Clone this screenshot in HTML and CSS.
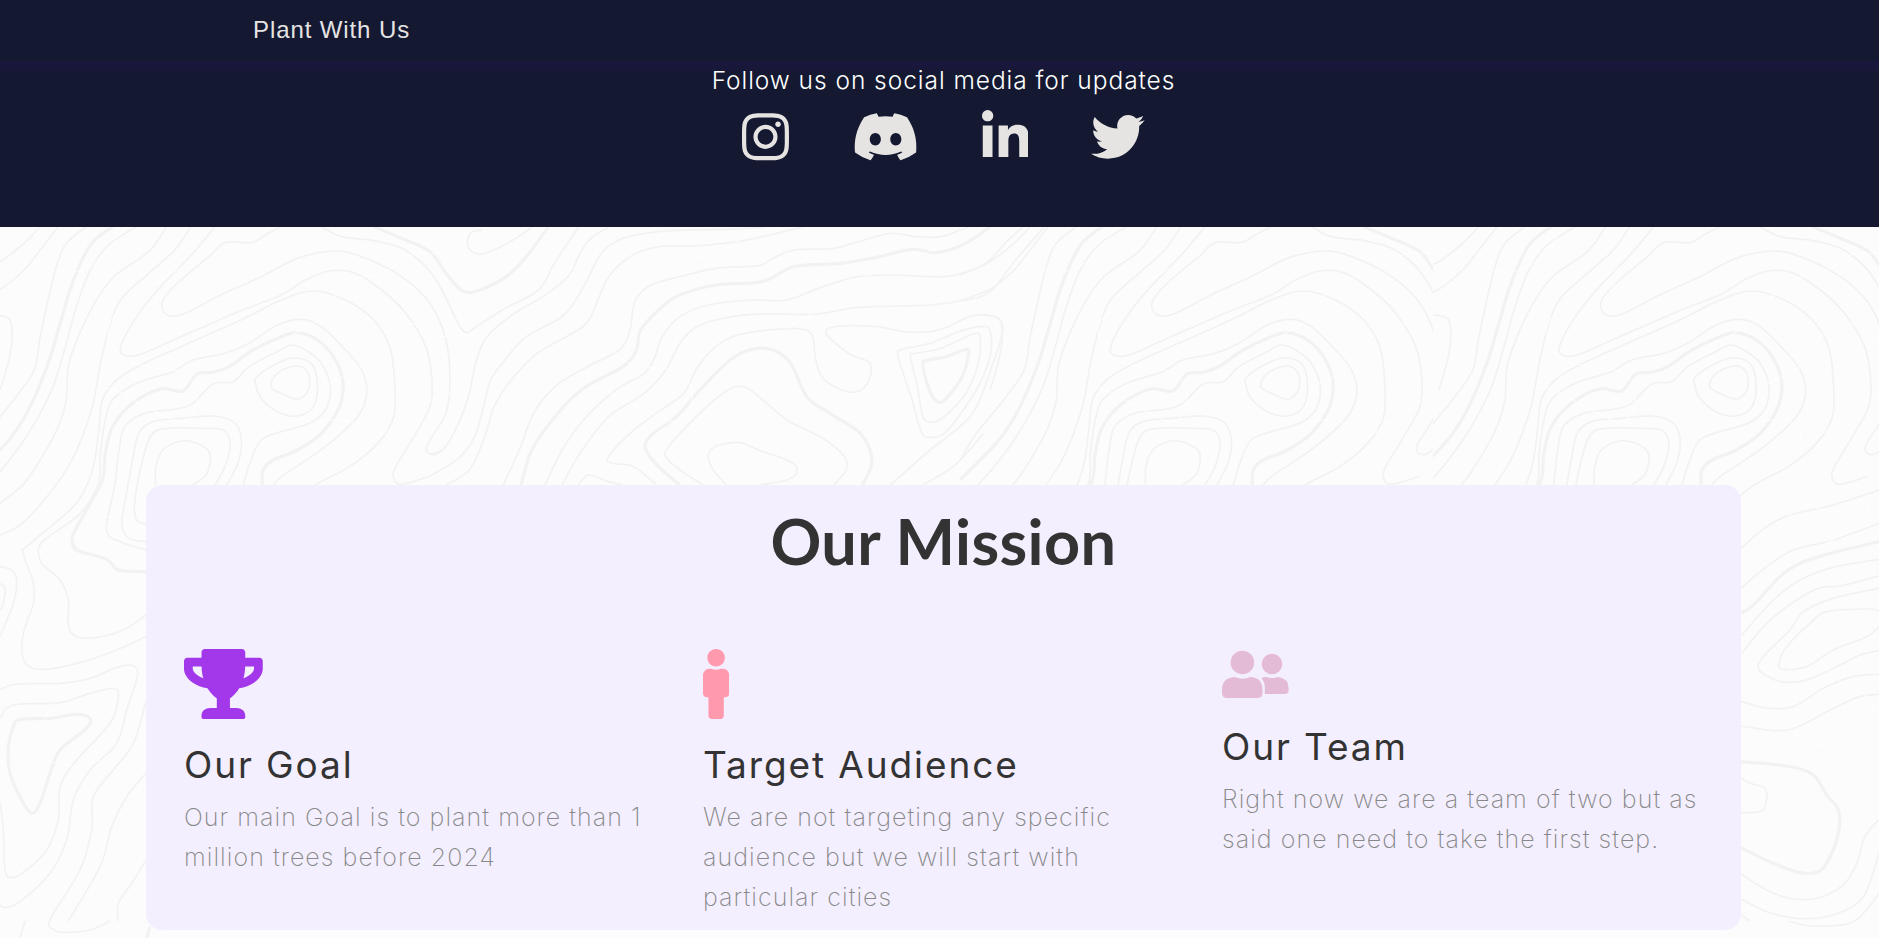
FILE: index.html
```html
<!DOCTYPE html>
<html lang="en">
<head>
    <meta charset="UTF-8">
    <meta name="viewport" content="width=device-width, initial-scale=1.0">
    <title>Plant With Us</title>
    <link rel="stylesheet" href="styles.css">
</head>
<body>
    <svg class="topo" id="topo" width="1879" height="938" viewBox="0 0 1879 938"></svg>

    <nav class="navbar">
        <a class="brand">Plant With Us</a>
    </nav>

    <section class="social">
        <p class="social-text">Follow us on social media for updates</p>
        <div class="social-icons">
            <svg class="icon-instagram" viewBox="0 0 448 512"><path d="M224.1 141c-63.6 0-114.9 51.3-114.9 114.9s51.3 114.9 114.9 114.9S339 319.5 339 255.9 287.7 141 224.1 141zm0 189.6c-41.1 0-74.7-33.5-74.7-74.7s33.5-74.7 74.7-74.7 74.7 33.5 74.7 74.7-33.6 74.7-74.7 74.7zm146.4-194.3c0 14.9-12 26.8-26.8 26.8-14.9 0-26.8-12-26.8-26.8s12-26.8 26.8-26.8 26.8 12 26.8 26.8zm76.1 27.2c-1.7-35.9-9.9-67.7-36.2-93.9-26.2-26.2-58-34.4-93.9-36.2-37-2.1-147.9-2.1-184.9 0-35.8 1.7-67.6 9.9-93.9 36.1s-34.4 58-36.2 93.9c-2.1 37-2.1 147.9 0 184.9 1.7 35.9 9.9 67.7 36.2 93.9s58 34.4 93.9 36.2c37 2.1 147.9 2.1 184.9 0 35.9-1.7 67.7-9.9 93.9-36.2 26.2-26.2 34.4-58 36.2-93.9 2.1-37 2.1-147.8 0-184.8zM398.8 388c-7.8 19.6-22.9 34.7-42.6 42.6-29.5 11.7-99.5 9-132.1 9s-102.7 2.6-132.1-9c-19.6-7.8-34.7-22.9-42.6-42.6-11.7-29.5-9-99.5-9-132.1s-2.6-102.7 9-132.1c7.8-19.6 22.9-34.7 42.6-42.6 29.5-11.7 99.5-9 132.1-9s102.7-2.6 132.1 9c19.6 7.8 34.7 22.9 42.6 42.6 11.7 29.5 9 99.5 9 132.1s2.7 102.7-9 132.1z"/></svg>
            <svg class="icon-discord" viewBox="0 0 640 512"><path d="M524.531,69.836a1.5,1.5,0,0,0-.764-.7A485.065,485.065,0,0,0,404.081,32.03a1.816,1.816,0,0,0-1.923.91,337.461,337.461,0,0,0-14.9,30.6,447.848,447.848,0,0,0-134.426,0,309.541,309.541,0,0,0-15.135-30.6,1.89,1.89,0,0,0-1.924-.91A483.689,483.689,0,0,0,116.085,69.137a1.712,1.712,0,0,0-.788.676C39.068,183.651,18.186,294.69,28.43,404.354a2.016,2.016,0,0,0,.765,1.375A487.666,487.666,0,0,0,176.02,479.918a1.9,1.9,0,0,0,2.063-.676A348.2,348.2,0,0,0,208.12,430.4a1.86,1.86,0,0,0-1.019-2.588,321.173,321.173,0,0,1-45.868-21.853,1.885,1.885,0,0,1-.185-3.126c3.082-2.309,6.166-4.711,9.109-7.137a1.819,1.819,0,0,1,1.9-.256c96.229,43.917,200.41,43.917,295.5,0a1.812,1.812,0,0,1,1.924.233c2.944,2.426,6.027,4.851,9.132,7.16a1.884,1.884,0,0,1-.162,3.126,301.407,301.407,0,0,1-45.89,21.83,1.875,1.875,0,0,0-1,2.611,391.055,391.055,0,0,0,30.014,48.815,1.864,1.864,0,0,0,2.063.7A486.048,486.048,0,0,0,610.7,405.729a1.882,1.882,0,0,0,.765-1.352C623.729,277.594,590.933,167.465,524.531,69.836ZM222.491,337.58c-28.972,0-52.844-26.587-52.844-59.239S193.056,219.1,222.491,219.1c29.665,0,53.306,26.82,52.843,59.239C275.334,310.993,251.924,337.58,222.491,337.58Zm195.38,0c-28.971,0-52.843-26.587-52.843-59.239S388.437,219.1,417.871,219.1c29.667,0,53.307,26.82,52.844,59.239C470.715,310.993,447.538,337.58,417.871,337.58Z"/></svg>
            <svg class="icon-linkedin" viewBox="0 0 448 512"><path d="M100.28 448H7.4V148.9h92.88zM53.79 108.1C24.09 108.1 0 83.5 0 53.8a53.79 53.79 0 0 1 107.58 0c0 29.7-24.1 54.3-53.79 54.3zM447.9 448h-92.68V302.4c0-34.7-.7-79.2-48.29-79.2-48.29 0-55.69 37.7-55.69 76.7V448h-92.78V148.9h89.08v40.8h1.3c12.4-23.5 42.69-48.3 87.88-48.3 94 0 111.28 61.9 111.28 142.3V448z"/></svg>
            <svg class="icon-twitter" viewBox="0 0 512 512"><path d="M459.37 151.716c.325 4.548.325 9.097.325 13.645 0 138.72-105.583 298.558-298.558 298.558-59.452 0-114.68-17.219-161.137-47.106 8.447.974 16.568 1.299 25.34 1.299 49.055 0 94.213-16.568 130.274-44.832-46.132-.975-84.792-31.188-98.112-72.772 6.498.974 12.995 1.624 19.818 1.624 9.421 0 18.843-1.3 27.614-3.573-48.081-9.747-84.143-51.98-84.143-102.985v-1.299c13.969 7.797 30.214 12.67 47.431 13.319-28.264-18.843-46.781-51.005-46.781-87.391 0-19.492 5.197-37.36 14.294-52.954 51.655 63.675 129.3 105.258 216.365 109.807-1.624-7.797-2.599-15.918-2.599-24.04 0-57.828 46.782-104.934 104.934-104.934 30.213 0 57.502 12.67 76.67 33.137 23.715-4.548 46.456-13.32 66.599-25.34-7.798 24.366-24.366 44.833-46.132 57.827 21.117-2.273 41.584-8.122 60.426-16.243-14.292 20.791-32.161 39.308-52.628 54.253z"/></svg>
        </div>
    </section>

    <section class="mission">
        <h1 class="mission-title">Our Mission</h1>
        <div class="mission-row">
            <div class="mission-col">
                <svg class="icon-trophy" viewBox="0 0 576 512"><path d="M552 64H448V24c0-13.3-10.7-24-24-24H152c-13.3 0-24 10.7-24 24v40H24C10.7 64 0 74.7 0 88v56c0 35.7 22.5 72.4 61.9 100.7 31.5 22.7 69.8 37.1 110 41.7C203.3 338.5 240 360 240 360v72h-48c-35.3 0-64 20.7-64 56v12c0 6.6 5.4 12 12 12h296c6.6 0 12-5.4 12-12v-12c0-35.3-28.7-56-64-56h-48v-72s36.7-21.5 68.1-73.6c40.3-4.6 78.6-19 110-41.7 39.3-28.3 61.9-65 61.9-100.7V88c0-13.3-10.7-24-24-24zM99.3 192.8C74.9 175.2 64 155.6 64 144v-16h64.2c1 32.6 5.8 61.2 12.8 86.2-15.1-5.2-29.2-12.4-41.7-21.4zM512 144c0 16.1-17.7 36.1-35.3 48.8-12.5 9-26.7 16.2-41.8 21.4 7-25 11.8-53.6 12.8-86.2H512v16z"/></svg>
                <h2>Our Goal</h2>
                <p>Our main Goal is to plant more than 1<br>million trees before 2024</p>
            </div>
            <div class="mission-col">
                <svg class="icon-person" viewBox="0 0 192 512"><path d="M96 0c35.346 0 64 28.654 64 64s-28.654 64-64 64-64-28.654-64-64S60.654 0 96 0m48 144h-11.36c-22.711 10.443-49.59 10.894-73.28 0H48c-26.51 0-48 21.49-48 48v136c0 13.255 10.745 24 24 24h16v136c0 13.255 10.745 24 24 24h64c13.255 0 24-10.745 24-24V352h16c13.255 0 24-10.745 24-24V192c0-26.51-21.49-48-48-48z"/></svg>
                <h2>Target Audience</h2>
                <p>We are not targeting any specific<br>audience but we will start with<br>particular cities</p>
            </div>
            <div class="mission-col">
                <svg class="icon-team" viewBox="0 0 67 52"><circle cx="20.4" cy="13.5" r="11.8"/><circle cx="50" cy="15" r="10.3"/><path d="M12 28q1.500 0 3 .8q5.400 2 11 0q1.500-.8 3-.8q11.500 1 11.500 13v3q0 5-5 5H5q-5 0-5-5v-3q0-12 12-13z"/><path d="M39.500 29.300q2-1.600 4.500-1.300q6 2.200 12 0q10.700 1 10.700 12v.8q0 4.200-4.200 4.200H42.800v-7q0-5-3.300-8.700z"/></svg>
                <h2>Our Team</h2>
                <p>Right now we are a team of two but as<br>said one need to take the first step.</p>
            </div>
        </div>
    </section>

    <script src="script.js"></script>
</body>
</html>
```
FILE: styles.css
```css
* {
    box-sizing: border-box;
}

body {
    margin: 0;
    height: 938px;
    overflow: hidden;
    background: #fcfcfc;
    font-family: Inter, "Open Sans", sans-serif;
}

/* contour map behind everything */
.topo {
    position: absolute;
    top: 0;
    left: 0;
    z-index: -1;
    fill: none;
    stroke: #f2f2f2;
}

.topo path {
    vector-effect: non-scaling-stroke;
    stroke-width: 1.7px;
}

.topo .bold {
    stroke-width: 3.2px;
}

.topo .road {
    stroke: #fff;
    stroke-width: 0.8px;
}

.navbar {
    height: 61px;
    padding: 16px 0 0 253px;
    background: #141931;
}

.brand {
    display: block;
    font-family: "Liberation Sans", Arial, sans-serif;
    font-size: 24px;
    line-height: 27px;
    letter-spacing: 0.9px;
    color: #e6e4e3;
}

/* soft purple glow under the navbar */
.social {
    height: 166px;
    padding-left: 8px;
    background: linear-gradient(#19173c, #19173c 4px, #141931 14px);
    text-align: center;
}

.social-text {
    margin: 0;
    padding-top: 3px;
    font-size: 24.5px;
    font-weight: 300;
    line-height: 32px;
    letter-spacing: 0.95px;
    color: #fff;
}

.social-icons {
    display: flex;
    justify-content: center;
    gap: 62.6px;
    padding-top: 13.500px;
    fill: #e6e4e3;
}

.social-icons svg {
    height: 53.7px;
}

.mission {
    width: 1595px;
    height: 445px;
    margin: 258px 0 0 146px;
    padding-top: 20px;
    border-radius: 16px;
    background: #f3effe;
    color: #333;
}

.mission-title {
    margin: 0;
    font-family: Lato, sans-serif;
    font-size: 63px;
    font-weight: 700;
    line-height: 72px;
    letter-spacing: 0.4px;
    text-align: center;
}

.mission-row {
    display: flex;
    padding: 72px 0 0 38px;
}

.mission-col {
    width: 519px;
}

.mission-col svg {
    display: block;
    height: 70px;
}

.mission-col h2 {
    margin: 24px 0 0;
    font-size: 37px;
    font-weight: 400;
    line-height: 44px;
    letter-spacing: 1.9px;
}

.mission-col p {
    margin: 10px 0 0;
    font-size: 25px;
    font-weight: 200;
    line-height: 40px;
    letter-spacing: 1.05px;
    color: #888;
}

.icon-trophy {
    fill: #a238ea;
}

.icon-person {
    fill: #ff99ad;
}

.mission-col .icon-team {
    height: 52px;
    fill: #e4bbd6;
}
```
FILE: script.js
```js
// Each line is a list of "x,y" points. Prefix: * bold, ~ road, trailing z closes it.
const hill = `
-74,165 0,125 55,75 100,20
-74,242 0,208 60,150 100,90 145,20
215,20 165,70 140,140 120,240 100,350 85,450 40,530 0,590 -40,650 -74,720
*280,20 225,75 180,190 150,310 120,430 75,560 35,640 0,690 -74,780
340,20 270,75 225,150 190,260 165,370 135,490 100,580 60,660 30,710 0,755 -30,795
415,20 370,95 285,168 235,250 195,350 170,440 165,540 145,620 110,700 60,790 0,850
475,20 435,90 370,160 300,240 270,330 250,430 232,550 205,650 170,740 110,840 50,915 0,945
535,20 480,100 400,200 340,290 302,375 308,405 350,403 450,350 600,272 700,225 760,180 820,153 880,158 950,210 1010,280 1060,380 1075,480 1070,560 1030,650 985,740 980,775 1000,793 1070,768
700,20 660,45 625,68 560,68 520,110 450,180 408,235 405,270 428,289 470,275 550,225 650,170 740,115 830,93 900,110 1000,170 1070,250 1110,360 1120,480 1110,580 1065,670 1065,697 1085,703 1110,680
800,20 850,50 930,62 1000,85 1060,140 1100,210 1140,310 1160,338 1180,325 1250,270 1340,210 1380,130 1440,20
*930,20 1000,55 1070,95 1110,160 1150,212 1190,212 1260,170 1310,110 1365,20
1200,30 1170,40 1165,80 1190,102 1230,90 1290,50 1325,20
55,990 100,945 190,850 230,750 245,640 255,540 290,480 350,435 450,380 600,300 700,240 780,213 860,240 930,300 970,380 982,480 980,590 940,670 870,740 785,795 720,860
95,990 110,960 200,880 245,790 250,700 262,600 280,540 340,490 430,455 480,420 560,400 620,370 690,315 750,298 800,320 860,390 900,450 913,520 890,590 820,670 750,730 700,770 680,795
*653,795 655,750 680,720 740,690 800,640 845,560 853,480 830,410 790,360 740,338 700,350 630,390 570,440 530,457 490,462 455,513 400,507 330,550 280,620 262,700 255,780 220,860 180,950 190,990
605,795 625,720 650,660 700,635 770,610 810,570 822,500 800,430 760,390 725,375 690,395 620,440 580,485 530,492 480,550 440,567 360,580 310,620 295,700 285,800 265,930 300,965 363,990
640,470 690,430 730,414 775,430 790,490 780,560 740,588 690,575 650,535 637,495 z
674,500 690,460 735,438 765,455 770,500 755,530 735,537 700,520 z
565,795 595,720 600,650 580,605 530,588 450,595 380,605 345,640 330,720 315,820 303,910 320,955 363,965
535,795 560,740 573,670 555,630 500,625 430,624 380,640 355,720 335,850 340,900 363,912
480,795 515,760 522,700 490,670 450,663 405,690 388,740 387,795
-14,285 0,287 25,300 30,360 20,430 0,510
~85,120 150,155 230,135 315,20
~445,145 330,240 270,320 300,410 370,440 460,460 490,530 460,605 380,570 290,512 240,505
~725,345 790,300 860,190 950,160 1030,103 1095,98 1165,40
~795,605 850,600 895,620 910,670 980,620 1030,580 1075,540 1160,490 1130,420 1190,350 1080,348 1020,310 950,350 900,440 810,500 785,570`;

const basin = `
0,703 40,685 80,610 110,520 130,420 160,350 230,285 330,220 390,165 420,100 450,55 500,22
0,768 80,715 125,650 150,560 170,480 210,420 270,350 375,285 430,200 480,100 540,55 640,35 740,30 860,27 940,20
45,795 110,750 150,660 180,560 220,490 300,400 430,318 470,240 500,170 560,110 640,80 740,78 860,65 950,45 1045,20
205,795 250,690 290,580 350,500 440,440 530,390 560,330 575,240 620,195 700,170 800,145 920,137 960,115 1020,90 1130,85 1200,65 1290,40 1360,50 1430,50 1510,20
*255,795 285,690 350,590 430,505 540,440 578,390 590,330 650,260 700,225 800,195 930,185 1020,140 1150,130 1250,112 1350,88 1420,98 1500,70 1568,20
322,795 370,690 430,600 520,510 600,460 630,410 650,350 700,290 780,255 900,240 1000,240 1100,200 1200,170 1300,165 1440,170 1520,150 1568,120 1610,70 1660,20
370,795 420,700 500,590 600,520 660,450 700,370 740,325 800,300 900,283 1080,282 1200,262 1400,255 1500,240 1568,215 1640,120 1720,20
635,795 570,740 510,730 500,710 560,640 640,575 710,520 750,440 800,380 860,345 950,330 1030,326 1070,345 1080,420 1105,480 1180,517 1225,490 1232,430 1180,405 1120,355 1110,330 1150,318 1250,320 1330,335 1400,335 1450,320 1510,290 1560,285 1600,305 1600,350 1577,430 1530,560 1484,620 1400,690 1290,795
415,795 430,775 450,765 500,785 540,795
*700,795 640,740 603,685 620,645 690,590 760,505 840,420 900,388 960,390 1010,430 1055,530 1120,580 1200,635 1232,690 1235,740 1210,795
765,795 700,750 660,710 665,685 700,640 760,575 820,520 860,500 900,512 1000,600 1100,655 1160,710 1165,750 1130,795
830,795 790,745 780,700 810,675 870,668 920,690 1010,725 1028,755 1000,780 925,795
1310,405 1320,388 1400,370 1480,335 1540,320 1568,330 1570,400 1540,490 1480,590 1440,640 1400,652 1375,635 1350,540 1325,460 z
1345,410 1360,400 1430,385 1520,342 1540,350 1535,430 1500,520 1440,590 1405,607 1380,590 1365,500 z
*1380,435 1395,420 1440,412 1500,388 1508,400 1490,470 1450,530 1425,547 1400,515 z
1380,795 1470,735 1550,640
~280,125 350,155 430,135 470,110
~900,30 820,90 650,150 540,260 480,340 560,430 690,455 735,520 700,605 600,570 450,505 390,650
~1000,325 1080,270 1150,190 1230,165 1310,103 1390,98 1500,20`;

const west = `
66,205 75,240 100,310 100,370 70,460 68,530 90,562 150,567 250,545 350,510 438,470
114,205 125,250 180,300 205,360 205,430 225,468 290,472 370,450 438,405
*217,180 230,210 320,238 355,270 438,275
0,260 35,270 50,300 40,370 0,470
0,310 15,325 10,370 0,390
0,628 50,612 180,610 270,595 350,562 400,557 412,590 380,690 350,790 270,870 220,960 200,1080 150,1180 60,1265 15,1283 0,1275
0,715 20,685 60,672 180,668 270,640 340,625 355,650 330,730 230,840 180,920 175,1020 140,1110 80,1170 35,1193 15,1170 10,1050 0,965
*60,718 150,715 230,703 270,715 260,745 180,810 150,880 120,970 95,1000 65,960 30,880 25,800 40,740 z
438,665 400,790 340,870 280,950 275,1050 240,1170 150,1320 165,1350 190,1357 270,1350 330,1323
438,880 380,950 335,1040 300,1160 205,1323
438,1140 395,1210 355,1270 355,1323
75,1323 60,1373
*450,1340 440,1373
~230,180 280,130 370,95
~150,690 100,810 210,858 300,840
~30,1085 120,1075 80,1140 40,1220`;

const east = `
123,205 200,140 270,105 400,75 537,30
123,325 200,260 280,210 400,180 537,130
*123,400 160,375 240,290 300,250 400,218 537,185
123,468 220,360 300,300 400,262 537,238
123,522 200,430 290,360 360,323 420,318 537,288
537,325 400,355 310,395 270,450 190,530 178,570 240,604 320,600 420,555 480,525 537,512
537,395 510,387 380,395 330,430 260,500 238,545 245,567 320,560 400,510 500,470 537,440
123,664 200,684 280,680 370,625 450,592 537,582
123,738 230,752 300,738 400,685 480,650 537,643
*123,845 220,853 300,866 345,890 380,945 415,990 415,1060 385,1140 355,1175 300,1178 220,1150 123,1103
123,895 150,910 195,925 198,970 180,995 123,998
123,1182 200,1230 270,1255 350,1255 430,1215 470,1150 495,1070 537,1018
123,1257 200,1295 290,1315 400,1305 490,1250 537,1120
265,1323 340,1338 460,1325 537,1240
123,1305 150,1323
~165,230 260,120 300,70 400,95 490,60 490,120 380,190 240,267 165,230
~180,670 300,540 350,525 400,590 510,660 490,730 345,793 180,670`;

// smooth curve through the points
function curve(pts, closed) {
    const n = pts.length;
    const at = i => closed ? pts[(i + n) % n] : pts[Math.max(0, Math.min(n - 1, i))];
    let d = `M${pts[0]}`;
    for (let i = 0; i < (closed ? n : n - 1); i++) {
        const [a, b, c, e] = [at(i - 1), at(i), at(i + 1), at(i + 2)];
        d += `C${b[0] + (c[0] - a[0]) / 6},${b[1] + (c[1] - a[1]) / 6} ${c[0] - (e[0] - b[0]) / 6},${c[1] - (e[1] - b[1]) / 6} ${c}`;
    }
    return d;
}

function region(lines, x, y, sx, sy) {
    const paths = lines.trim().split('\n').map(line => {
        const cls = line[0] === '*' ? 'bold' : line[0] === '~' ? 'road' : 'thin';
        const pts = line.match(/-?\d+,\d+/g).map(p => p.split(',').map(Number));
        return `<path class="${cls}" d="${curve(pts, line.endsWith('z'))}"/>`;
    }).join('');
    return `<g transform="translate(${x} ${y}) scale(${sx} ${sy})">${paths}</g>`;
}

const third = 1 / 3;
document.getElementById('topo').innerHTML = `
    <clipPath id="left"><path d="M0 0H1433V938H0z"/></clipPath>
    <clipPath id="right"><path d="M1433 0H1879V938H1433z"/></clipPath>
    <g clip-path="url(#left)">
        ${region(hill, 0, 220, 1 / 2.489, third)}
        ${region(hill, 990, 220, 1 / 2.489, third)}
        ${region(basin, 430, 220, 1 / 2.8, third)}
        ${region(west, 0, 480, third, third)}
    </g>
    <g clip-path="url(#right)">
        ${region(hill, 1438.7, 220, 1 / 2.489, third)}
        ${region(east, 1700, 480, third, third)}
    </g>`;
```
